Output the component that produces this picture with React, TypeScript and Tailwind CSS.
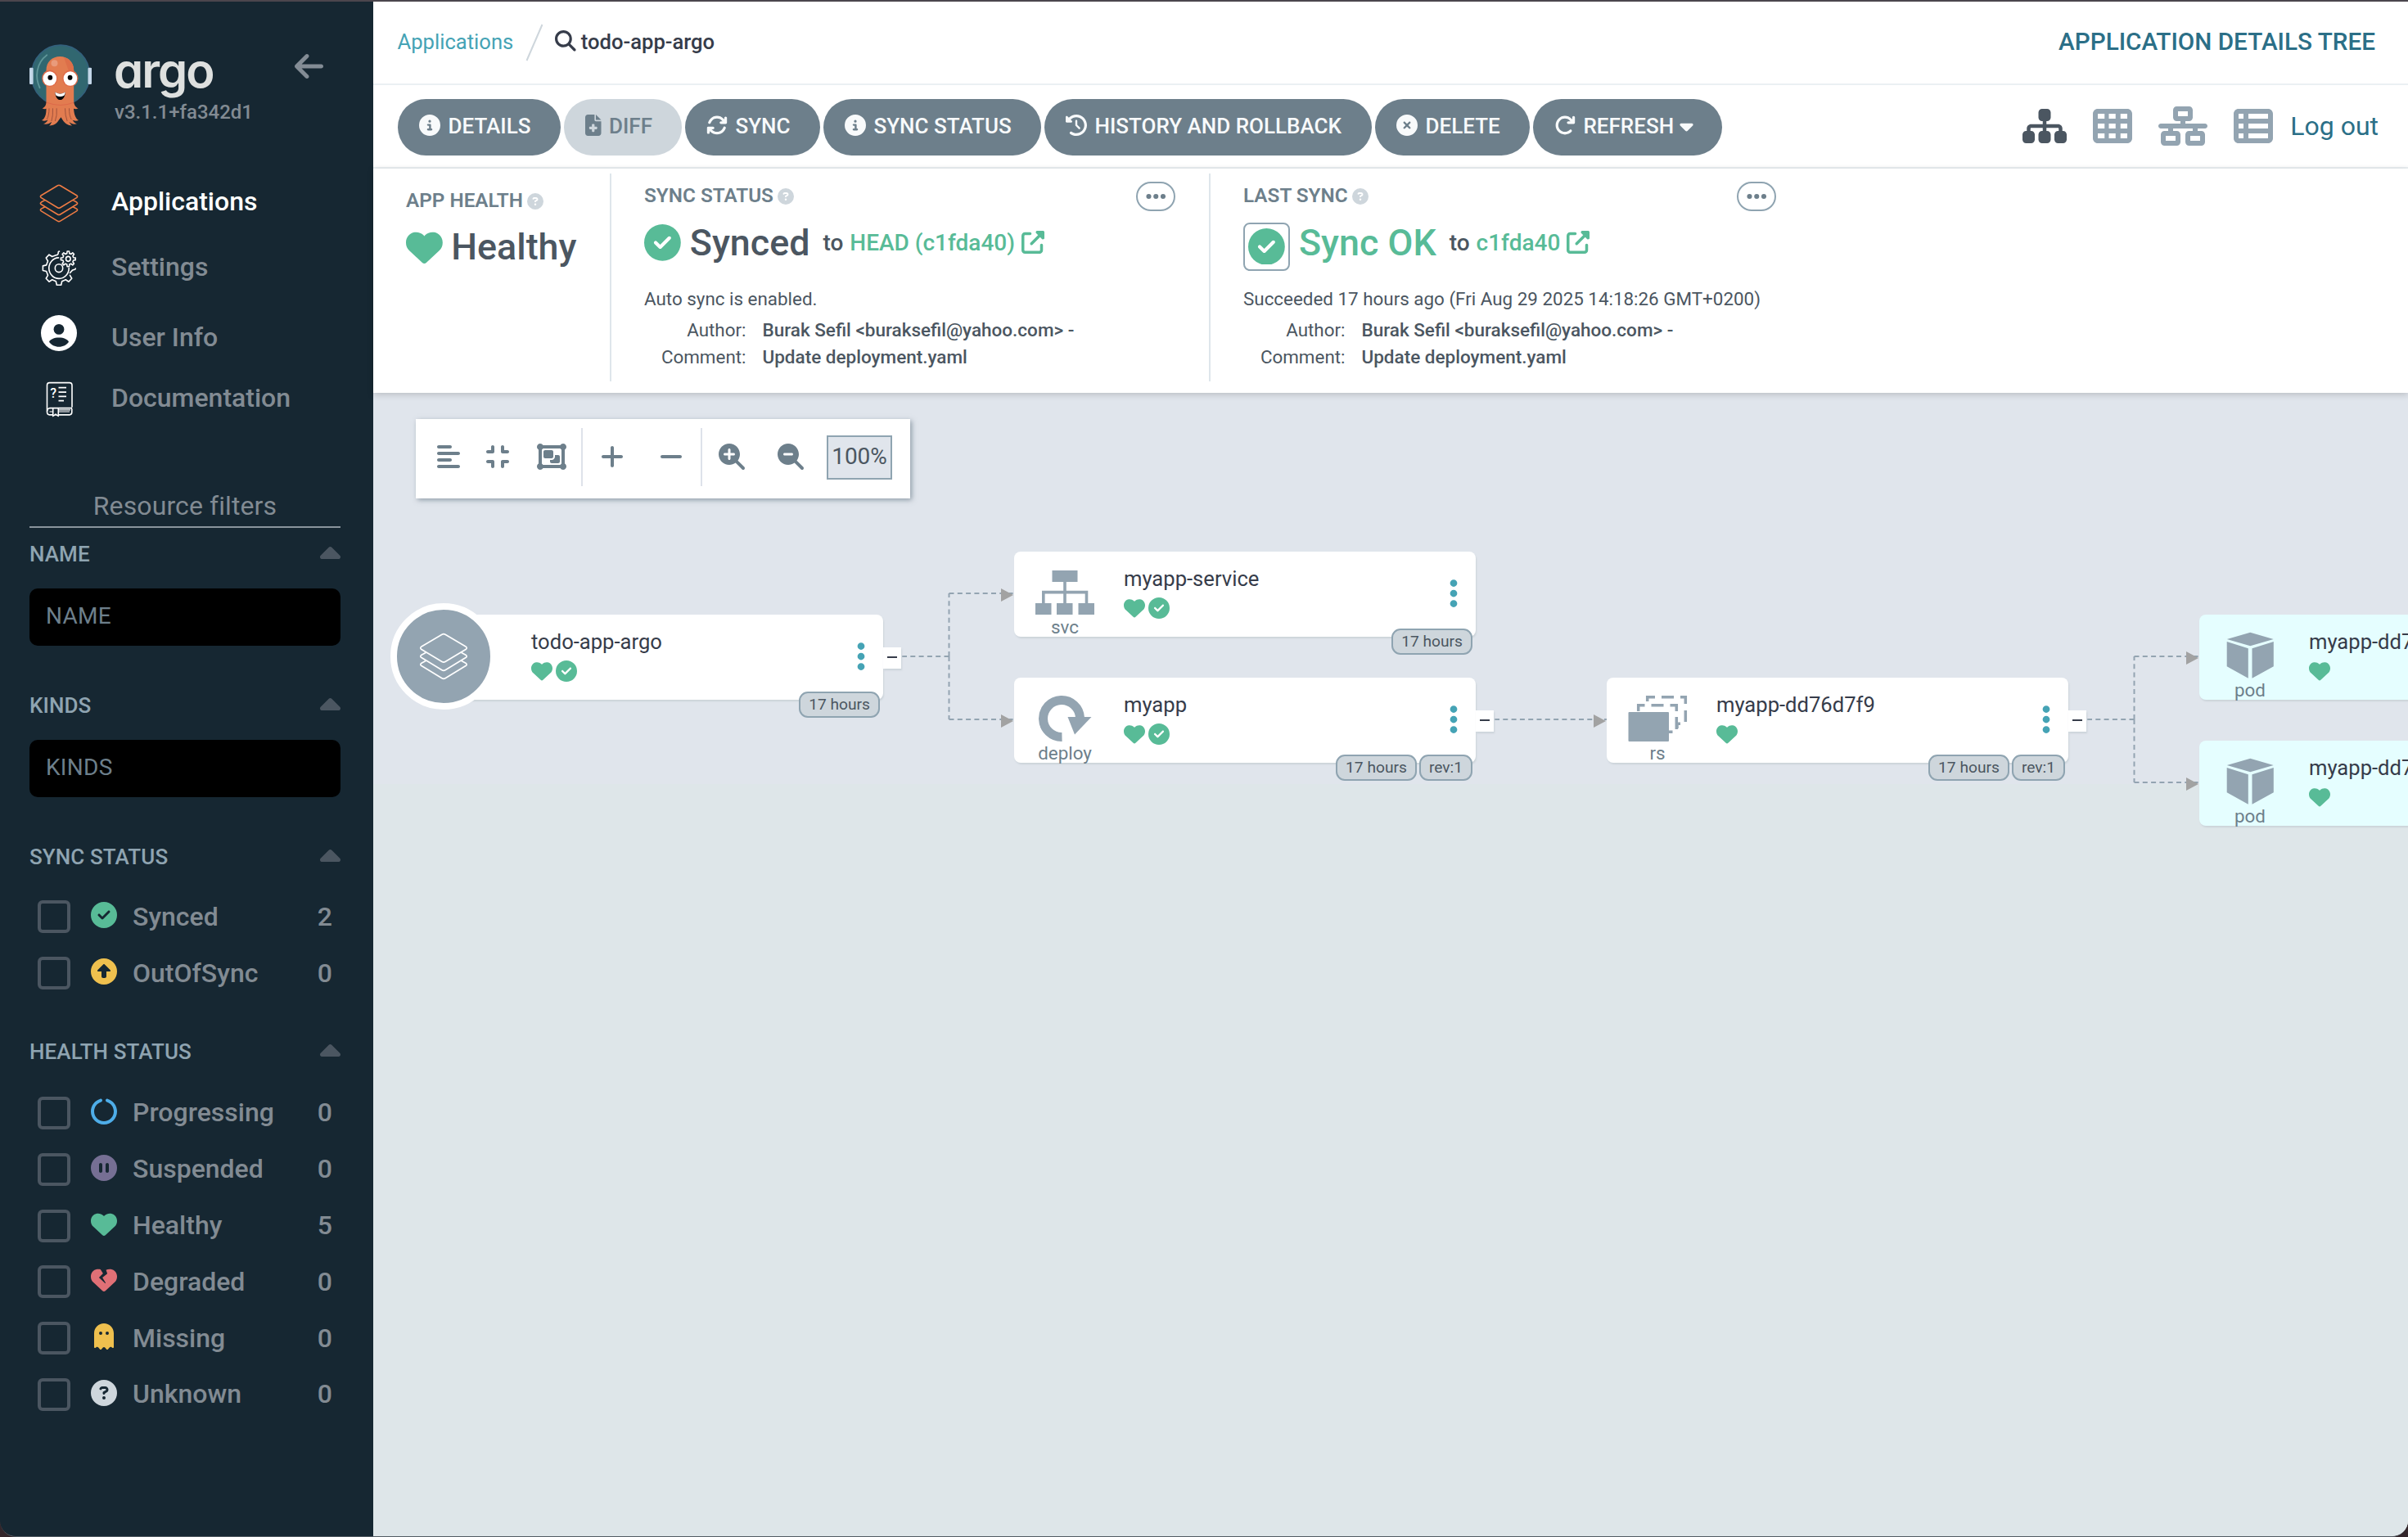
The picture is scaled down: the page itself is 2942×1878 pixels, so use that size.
import type { ReactNode } from "react";
import {
  FaAlignLeft, FaArrowLeft, FaArrowRotateRight, FaArrowsRotate, FaCaretDown, FaCaretUp, FaCircleCheck, FaCircleInfo,
  FaCircleNotch, FaCirclePause, FaCircleQuestion, FaCircleUp, FaCircleXmark, FaClockRotateLeft, FaCompress, FaEllipsis,
  FaEllipsisVertical, FaFileMedical, FaGhost, FaHeart, FaHeartCrack, FaMagnifyingGlass, FaMagnifyingGlassMinus,
  FaMagnifyingGlassPlus, FaMinus, FaNetworkWired, FaObjectGroup, FaPlus, FaSitemap, FaTableCells, FaTableList,
  FaUpRightFromSquare,
} from "react-icons/fa6";

/* ---------- drawings ---------- */

function Octopus() {
  return (
    <svg width="76" height="100" viewBox="0 0 76 94" preserveAspectRatio="none" className="shrink-0">
      <ellipse cx="38" cy="35.5" rx="35.5" ry="34.5" fill="#316770" stroke="#33607c" strokeWidth="1.6" />
      <rect x="0" y="27" width="4.6" height="19" rx="1.2" fill="#c3d6e8" />
      <rect x="71.5" y="27" width="4.6" height="19" rx="1.2" fill="#c3d6e8" />
      <path d="M21.3 12.5C8 22 6.500 38 12.600 50" fill="none" stroke="#5f9699" strokeWidth="1.8" strokeLinecap="round" />
      <path
        d="M20.500 30C20.500 20 28 14 37.300 14S54.200 20 54.200 30V66C54.500 70 57 73 59.500 73.500C57.500 75 56 74.500 54 74C54.500 80 56 85 60 87.500C57 88.500 54 88 52.500 87C54 89.500 56 91 58 91.500C54 92.500 50 91 48.500 89C49.500 91.500 51 92.500 52 93.500C47 93.500 43 91 40.500 87L38.500 84L36 87C33.500 91.500 28.500 93.800 24 93.500C25.500 92.500 26.500 91 27 89C24.500 91.500 20.500 92.500 17 91.500C20 90.500 21.500 89 22.500 87C20.500 88.200 17.500 88.500 15 87.500C19.500 85 20.500 80 20.500 74C19 74.800 17.500 74.500 15.500 73.500C18.500 73 20.500 70 20.500 66Z"
        fill="#e27c50"
      />
      <path d="M42 15C50 17 54.200 23 54.200 30V42L48 31Z" fill="#dd6f49" />
      <path d="M24 74Q24 82 21.500 86M28.500 74Q29 82 27 88M33.200 74Q34 82 31.500 88M43.500 74Q43.500 82 46 88M48.500 74Q48.500 82 51 86" stroke="#9c4f3a" strokeWidth="0.900" fill="none" strokeLinecap="round" />
      <path d="M21 67Q38 73 54 67" stroke="#dd6a4a" strokeWidth="1" fill="none" />
      <ellipse cx="30.500" cy="21.800" rx="4" ry="3.800" fill="#e99b7b" />
      <circle cx="24.800" cy="39.300" r="9.600" fill="#df6a48" />
      <circle cx="49.900" cy="39.300" r="9.600" fill="#df6a48" />
      <circle cx="24.800" cy="39.500" r="8.300" fill="#fff" />
      <circle cx="49.900" cy="39.500" r="8.300" fill="#fff" />
      <circle cx="25.300" cy="38.300" r="2.900" fill="#05070a" />
      <circle cx="49.600" cy="38.300" r="2.900" fill="#05070a" />
      <path d="M31.300 55Q37.500 59 43.800 55C43.600 60.500 41 64 37.500 64S31.600 60.500 31.300 55Z" fill="#05070a" />
      <path d="M31.300 55Q37.500 59 43.800 55Q43.500 57.500 42.300 59Q37.500 61.500 32.600 59Q31.500 57.500 31.300 55Z" fill="#fff" />
    </svg>
  );
}

function Layers({ width, height, stroke }: { width: number; height: number; stroke: number }) {
  return (
    <svg width={width} height={height} viewBox="-1 -1 60 58" preserveAspectRatio="none" fill="none" stroke="currentColor" strokeWidth={stroke} strokeLinejoin="round" strokeLinecap="round">
      <path d="M27 1.200Q29 0 31 1.200L56 15.900Q58.500 17.700 56 19.500L31 34.500Q29 35.700 27 34.500L2 19.500Q-.5 17.700 2 15.900Z" />
      <path d="M7.500 23.200L2 26.200Q-.5 28 2 29.600L27 44.700Q29 45.900 31 44.700L56 29.600Q58.500 28 56 26.200L50.500 23.200" />
      <path d="M7.500 33.200L2 36.200Q-.5 38 2 39.600L27 54.700Q29 55.900 31 54.700L56 39.600Q58.500 38 56 36.200L50.500 33.200" />
    </svg>
  );
}

/* Outline of a cog: a rounded tooth every 360/teeth degrees, drawn from tooth `from` up to tooth `to`. */
function cog(cx: number, cy: number, root: number, tip: number, teeth: number, from: number, to: number) {
  const step = (Math.PI * 2) / teeth;
  const pts: string[] = [];
  const at = (r: number, a: number) => `${(cx + r * Math.cos(a)).toFixed(2)} ${(cy + r * Math.sin(a)).toFixed(2)}`;
  for (let i = from; i < to; i++) {
    const a = i * step;
    pts.push(at(root, a - step * 0.3), at(tip, a - step * 0.17), at(tip, a + step * 0.17), at(root, a + step * 0.3));
  }
  return "M" + pts.join("L");
}

function Gears() {
  return (
    <svg width="44" height="44" viewBox="-1 -1 44 42" preserveAspectRatio="none" fill="none" stroke="#fff" strokeWidth="1.6" strokeLinejoin="round" strokeLinecap="round">
      <path d={cog(21, 19.7, 15.8, 19.8, 8, 1, 6) + "L17.500 4.500Q20.500 4.500 20.200 1Q20.300 0 21.500 0"} />
      <path d="M34.500 25.200L37 22.500Q38 21.300 40 21.300Q41.300 21.200 41.300 20" />
      <path d="M20.500 7.500A12.200 12.200 0 1 0 33.200 19.500" />
      <circle cx="21" cy="19.700" r="4.700" />
      <path d={cog(32.3, 8.9, 6.6, 9, 8, 0, 8) + "Z"} />
      <circle cx="32.300" cy="8.900" r="2.800" />
    </svg>
  );
}

function UserCircle() {
  return (
    <svg width="44" height="44" viewBox="0 0 44 44">
      <circle cx="22" cy="22" r="22" fill="#fff" />
      <circle cx="22" cy="17.400" r="6.400" fill="#162732" />
      <path d="M10 32.800C11.500 29.500 16 27.500 22 27.500S32.500 29.500 34 32.800C31.500 36.600 27 38.800 22 38.800S12.500 36.600 10 32.800Z" fill="#162732" />
    </svg>
  );
}

function Book() {
  return (
    <svg width="34" height="44" viewBox="-1 -1 34 41" preserveAspectRatio="none" fill="none" stroke="#fff" strokeWidth="1.600" strokeLinejoin="round">
      <path d="M7 37H3.500Q.5 37 .5 33.500V3.500Q.5 .5 3.500 .5H28Q31 .5 31 3.500V28.500" />
      <path d="M31 29.500H3.500Q.8 29.700 .6 33M14.500 37H28.500Q31 36.500 30.800 33.500V30" />
      <path d="M3.500 33.400H7.500M14.500 33.400H28M14.500 31.500H29" strokeWidth="1" />
      <path d="M7.700 29.800V38.500L11 36.500L14.300 38.500V29.800" />
      <path d="M14.500 6.200H24M14.500 11.200H24M14.500 16.200H24M14.500 21H21" />
      <text x="4.200" y="17.500" fill="#fff" stroke="none" fontFamily="Roboto, sans-serif" fontWeight="500" fontSize="16">?</text>
    </svg>
  );
}

const kindDrawings: Record<string, ReactNode> = {
  svc: (
    <g>
      <path d="M46.500 23h31v14h-31zM26 63h19.500v14h-19.500zM52 63h19.500v14h-19.500zM78.500 63h19.500v14h-19.500z" fill="#93a4b1" />
      <path d="M62 37V63M35.800 63V49.600H88.500V63" fill="none" stroke="#93a4b1" strokeWidth="3.600" />
    </g>
  ),
  deploy: (
    <g>
      <path d="M58.500 72.500A22.500 22.500 0 1 1 80.500 49" fill="none" stroke="#93a4b1" strokeWidth="11" />
      <path d="M65.500 48H94.500L74 69.500Z" fill="#93a4b1" />
    </g>
  ),
  rs: (
    <g>
      <rect x="26.500" y="42" width="49.500" height="36" rx="1" fill="#93a4b1" />
      <path d="M38.700 41V33.700H46.500M54.500 33.700H69.500M77.500 33.700H85.300V41M85.300 48V63M80.500 66.300H76M86 58v4" fill="none" stroke="#93a4b1" strokeWidth="3.500" />
      <path d="M49.700 29V23.700H59M67 23.700H82M90 23.700H96.300V32M96.300 40V54M90 56.300H85" fill="none" stroke="#93a4b1" strokeWidth="3.500" />
    </g>
  ),
  pod: (
    <path d="M62.300 21.700L90.700 30L62.300 38.300L33.800 30ZM33.700 33L59.800 41.300V77.700L33.700 63.300ZM64.500 41.300L90.800 33V63.300L64.500 77.700Z" fill="#93a4b1" />
  ),
};

/* ---------- sidebar ---------- */

function NavItem({ icon, label, active, className }: { icon: ReactNode; label: string; active?: boolean; className: string }) {
  return (
    <div className={`flex h-10 items-center ${className}`}>
      <span className="flex w-[72px] shrink-0 justify-center">{icon}</span>
      <span className={`ml-[28px] text-[32px] leading-10 font-medium whitespace-nowrap ${active ? "text-white" : "text-[#828b93]"}`}>{label}</span>
    </div>
  );
}

function FilterHeading({ label, className }: { label: string; className: string }) {
  return (
    <div className={`flex h-[30px] items-center justify-between text-[26px] leading-[30px] font-medium tracking-[0.1px] text-[#8fa4b1] ${className}`}>
      <span className="mb-px">{label}</span>
      <FaCaretUp className="mt-px h-10 w-[25px] text-[#4b5661]" />
    </div>
  );
}

function FilterInput({ label }: { label: string }) {
  return (
    <div className="mt-[26.5px] flex h-[70px] items-center rounded-[10px] bg-black pb-px pl-[20px] text-[28px] tracking-[0.3px] text-[#6d7f8b]">{label}</div>
  );
}

function FilterRow({ icon, label, count }: { icon: ReactNode; label: string; count: number }) {
  return (
    <div className="flex h-[68.8px] items-center pr-[10px] pl-[10px] text-[32px] leading-10 font-medium text-[#828b93]">
      <span className="size-10 shrink-0 rounded-md border-4 border-[#4b5661]" />
      <span className="mb-1 ml-[25px] flex w-8 justify-center text-[32px]">{icon}</span>
      <span className="mb-px ml-[19px] flex-1">{label}</span>
      <span className="mb-px">{count}</span>
    </div>
  );
}

function Sidebar() {
  return (
    <aside className="flex h-full w-[456px] shrink-0 flex-col bg-[#162732] pr-10 pl-9">
      <div className="mt-[51.5px] flex h-[100px] shrink-0">
        <Octopus />
        <div className="ml-7 flex flex-1 flex-col">
          <span className="mt-[2px] -ml-px font-[Inter] text-[58px] leading-[60px] font-semibold tracking-[-2px] text-[#dee0df] [font-feature-settings:'cv11']">argo</span>
          <span className="mt-[7px] text-[24px] leading-7 font-medium text-[#828b93]">v3.1.1+fa342d1</span>
        </div>
        <FaArrowLeft className="mt-[7.5px] mr-[21px] h-10 w-[35px] text-[#838c95]" />
      </div>
      <nav className="mt-[72.5px]">
        <NavItem className="" active label="Applications" icon={<span className="mt-1 text-[#ee7b44]"><Layers width={48} height={47} stroke={2} /></span>} />
        <NavItem className="mt-[40px]" label="Settings" icon={<span className="mt-1"><Gears /></span>} />
        <NavItem className="mt-[46px]" label="User Info" icon={<span className="-mt-[11px]"><UserCircle /></span>} />
        <NavItem className="mt-[33.5px]" label="Documentation" icon={<span className="mt-[5px] ml-px"><Book /></span>} />
      </nav>
      <div className="mt-[92px] border-b-2 border-[#8a949c] pb-[5px] text-center text-[32px] leading-10 tracking-[0.1px] text-[#828b93]">Resource filters</div>
      <FilterHeading className="mt-[17.5px]" label="NAME" />
      <FilterInput label="NAME" />
      <FilterHeading className="mt-[58.5px]" label="KINDS" />
      <FilterInput label="KINDS" />
      <FilterHeading className="mt-[58.5px]" label="SYNC STATUS" />
      <div className="mt-[24px]">
        <FilterRow label="Synced" count={2} icon={<FaCircleCheck className="text-[#58bb97]" />} />
        <FilterRow label="OutOfSync" count={0} icon={<FaCircleUp className="text-[#efc04e]" />} />
      </div>
      <FilterHeading className="mt-[47px]" label="HEALTH STATUS" />
      <div className="mt-[25px]">
        <FilterRow label="Progressing" count={0} icon={<FaCircleNotch className="text-[#4eade8]" />} />
        <FilterRow label="Suspended" count={0} icon={<FaCirclePause className="text-[#766f94]" />} />
        <FilterRow label="Healthy" count={5} icon={<FaHeart className="text-[#58bb97]" />} />
        <FilterRow label="Degraded" count={0} icon={<FaHeartCrack className="text-[#e07076]" />} />
        <FilterRow label="Missing" count={0} icon={<FaGhost className="text-[#efc04e]" />} />
        <FilterRow label="Unknown" count={0} icon={<FaCircleQuestion className="text-[#ced6dc]" />} />
      </div>
    </aside>
  );
}

/* ---------- top bars ---------- */

function Breadcrumbs() {
  return (
    <div className="flex h-[102px] items-center border-b-2 border-[#ebf0f3] pr-[40px] pb-px pl-[29.5px] text-[25.6px]">
      <span className="text-[#45a3b5]">Applications</span>
      <svg width="22" height="46" viewBox="0 0 22 46" className="mr-[14px] ml-[15px]"><path d="M1.500 45L20.500 1" stroke="#ced6dc" strokeWidth="2" /></svg>
      <FaMagnifyingGlass className="mb-[3px] text-[#363c4a]" />
      <span className="ml-[6px] flex-1 font-medium text-[#363c4a]">todo-app-argo</span>
      <span className="mb-px text-[29.7px] font-medium text-[#2b6f87]">APPLICATION DETAILS TREE</span>
    </div>
  );
}

function ActionButton({ icon, children, width, tone = "bg-[#6d7f8b] text-[#f8fafb]" }: { icon: ReactNode; children: ReactNode; width: string; tone?: string }) {
  return (
    <span className={`flex h-[69px] shrink-0 items-center gap-[9.5px] rounded-full pb-[3px] pl-[26px] text-[26px] font-medium whitespace-nowrap ${width} ${tone}`}>
      <span className="-mt-[2px]">{icon}</span>
      <span>{children}</span>
    </span>
  );
}

function Toolbar() {
  return (
    <div className="flex h-[102px] justify-between border-b-2 border-[#ebf0f3] pr-[36px] pl-[30px]">
      <div className="mt-[17px] flex gap-1">
        <ActionButton width="w-[199px]" icon={<FaCircleInfo />}>DETAILS</ActionButton>
        <ActionButton width="w-[144px]" tone="bg-[#ced6dc] text-[#6d7f8b]" icon={<FaFileMedical className="w-[19.5px]" />}>DIFF</ActionButton>
        <ActionButton width="w-[165px]" icon={<FaArrowsRotate />}>SYNC</ActionButton>
        <ActionButton width="w-[266px]" icon={<FaCircleInfo />}>SYNC STATUS</ActionButton>
        <ActionButton width="w-[400px]" icon={<FaClockRotateLeft />}>HISTORY AND ROLLBACK</ActionButton>
        <ActionButton width="w-[189px]" icon={<FaCircleXmark />}>DELETE</ActionButton>
        <ActionButton width="w-[231px]" icon={<FaArrowRotateRight />}><span className="flex items-center gap-[7px]">REFRESH <FaCaretDown className="w-[17px]" /></span></ActionButton>
      </div>
      <div className="flex h-[100px] items-center gap-8 text-[#93a4b1]">
        <FaSitemap className="h-12 w-[54px] text-[#4b5661]" />
        <FaTableCells className="size-12" />
        <FaNetworkWired className="h-12 w-[60px]" />
        <FaTableList className="size-12" />
        <span className="mb-px -ml-[10.5px] text-[32px] text-[#2b6f87]">Log out</span>
      </div>
    </div>
  );
}

/* ---------- status panel ---------- */

function PanelLabel({ children }: { children: ReactNode }) {
  return (
    <span className="flex items-center gap-[5px] text-[24.3px] leading-[30px] font-semibold text-[#6d7f8b]">
      {children}
      <FaCircleQuestion className="mt-[2px] size-5 text-[#ced6dc]" />
    </span>
  );
}

function SyncColumn({ label, status, target, note, bordered }: { label: string; status: ReactNode; target: string; note: string; bordered?: boolean }) {
  return (
    <section className={`h-[254px] w-[732px] pt-[10px] pr-[41px] pl-10 ${bordered ? "border-r-2 border-[#dee6eb]" : ""}`}>
      <div className="flex h-9 items-center justify-between">
        <div className="mb-[2px]"><PanelLabel>{label}</PanelLabel></div>
        <span className="flex h-9 w-12 items-center justify-center rounded-full border-2 border-[#8fa4b1]"><FaEllipsis className="h-7 w-[24.5px] text-[#6d7f8b]" /></span>
      </div>
      <div className="mt-[13.5px] flex h-[50px] items-center">
        {status}
        <span className="ml-4 text-[28px] font-medium text-[#4b5661]">to</span>
        <span className="ml-2 text-[28px] font-medium text-[#58bb97]">{target}</span>
        <FaUpRightFromSquare className="mb-px ml-2 size-7 text-[#58bb97]" />
      </div>
      <div className="mt-[28.5px] text-[22.4px] leading-[30px] text-[#4b5661]">{note}</div>
      <div className="mt-[7px] grid grid-cols-[124.5px_1fr] gap-x-[20px] text-[22.4px] leading-[33px] text-[#4b5661]">
        <span className="text-right">Author:</span>
        <span className="text-[22.5px] font-medium">Burak Sefil &lt;buraksefil@yahoo.com&gt; -</span>
        <span className="text-right">Comment:</span>
        <span className="text-[22.5px] font-medium">Update deployment.yaml</span>
      </div>
    </section>
  );
}

function StatusPanel() {
  return (
    <div className="relative z-10 flex h-[274px] bg-white pt-[6px] shadow-[0_2px_8px_rgba(0,0,0,0.18)]">
      <section className="h-[254px] w-[291px] border-r-2 border-[#dee6eb] pt-[18px] pl-10">
        <PanelLabel>APP HEALTH</PanelLabel>
        <div className="mt-[17px] flex h-[50px] items-center gap-[10.5px]">
          <FaHeart className="size-[44.8px] text-[#58bb97]" />
          <span className="text-[44.8px] font-medium text-[#4b5661]">Healthy</span>
        </div>
      </section>
      <SyncColumn
        bordered
        label="SYNC STATUS"
        target="HEAD (c1fda40)"
        note="Auto sync is enabled."
        status={
          <>
            <FaCircleCheck className="size-[44.8px] text-[#58bb97]" />
            <span className="mt-px ml-[11px] text-[44.8px] leading-[50px] font-medium text-[#4b5661]">Synced</span>
          </>
        }
      />
      <SyncColumn
        label="LAST SYNC"
        target="c1fda40"
        note="Succeeded 17 hours ago (Fri Aug 29 2025 14:18:26 GMT+0200)"
        status={
          <>
            <span className="flex h-[59px] w-[57px] shrink-0 items-center justify-center self-start rounded-lg border-2 border-[#8fa4b1]"><FaCircleCheck className="size-[44.8px] text-[#58bb97]" /></span>
            <span className="mt-px ml-[11px] text-[44.8px] leading-[50px] font-medium text-[#58bb97]">Sync OK</span>
          </>
        }
      />
    </div>
  );
}

/* ---------- resource tree ---------- */

function ZoomBar() {
  return (
    <div className="absolute top-8 left-[52px] flex h-[97px] w-[604px] items-center bg-white pb-[5px] pl-[26px] text-[32px] text-[#6d7f8b] shadow-[2px_2px_6px_rgba(109,127,139,0.7)]">
      <FaAlignLeft className="h-8 w-7" />
      <FaCompress className="ml-8 h-8 w-7" />
      <FaObjectGroup className="ml-[34px] h-8 w-9" />
      <span className="ml-[18px] h-[71px] w-[2px] bg-[#dee2ea]" />
      <FaPlus className="ml-[22px] h-8 w-7" />
      <FaMinus className="ml-11 h-8 w-7" />
      <span className="ml-[22px] h-[71px] w-[2px] bg-[#dee2ea]" />
      <FaMagnifyingGlassPlus className="ml-5 size-8" />
      <FaMagnifyingGlassMinus className="ml-10 size-8" />
      <span className="mt-px ml-7 flex h-[54px] w-20 items-center justify-center border-2 border-[#8fa4b1] bg-[#e0e5ec] pb-[2px] text-[28px] text-[#4b5661]">100%</span>
    </div>
  );
}

type TreeNode = { id: string; name: string; kind: string; x: number; y: number; synced?: boolean; tags: string[]; children?: boolean };

const nodes: TreeNode[] = [
  { id: "app", name: "todo-app-argo", kind: "app", x: 59, y: 271, synced: true, tags: ["17 hours"], children: true },
  { id: "svc", name: "myapp-service", kind: "svc", x: 783, y: 194, synced: true, tags: ["17 hours"] },
  { id: "deploy", name: "myapp", kind: "deploy", x: 783, y: 348, synced: true, tags: ["17 hours", "rev:1"], children: true },
  { id: "rs", name: "myapp-dd76d7f9", kind: "rs", x: 1507, y: 348, tags: ["17 hours", "rev:1"], children: true },
  { id: "pod-1", name: "myapp-dd76d7f9", kind: "pod", x: 2231, y: 271, tags: [] },
  { id: "pod-2", name: "myapp-dd76d7f9", kind: "pod", x: 2231, y: 425, tags: [] },
];

function ResourceCard({ node }: { node: TreeNode }) {
  return (
    <div
      className={`absolute h-[104px] w-[564px] rounded-lg shadow-[1px_2px_2px_#ccd4da] ${node.kind === "pod" ? "bg-[#e5feff]" : "bg-white"}`}
      style={{ left: node.x, top: node.y }}
    >
      {node.kind === "app" ? (
        <span className="absolute -top-[14px] -left-[38px] flex size-[130px] items-center justify-center rounded-full border-8 border-white bg-[#93a4b1] text-white">
          <Layers width={60} height={58} stroke={1.7} />
        </span>
      ) : (
        <>
          <svg width="124" height="104" viewBox="0 0 124 104" className="absolute top-0 left-0">{kindDrawings[node.kind]}</svg>
          <span className="absolute top-[77px] left-0 w-[124px] text-center text-[22.4px] leading-[30px] text-[#6d7f8b]">{node.kind}</span>
        </>
      )}
      <div className="ml-[134px] pt-[18px] text-[25.6px] leading-[30px] whitespace-nowrap text-[#363c4a]">
        <div>{node.name}</div>
        <div className="mt-2 flex gap-1 text-[26px] text-[#58bb97]">
          <FaHeart />
          {node.synced && <FaCircleCheck />}
        </div>
      </div>
      <FaEllipsisVertical className="absolute top-[31px] left-[532px] h-10 w-[10px] text-[#45a3b5]" />
      {node.children && (
        <span className="absolute top-10 left-[564px] flex h-[26px] w-[22px] items-center justify-center bg-white pb-[2px] shadow-[1px_2px_2px_#ccd4da]">
          <span className="h-[2px] w-3 bg-[#363c4a]" />
        </span>
      )}
      {node.tags.length > 0 && (
        <div className="absolute top-[94px] right-1 flex gap-[3px] text-[19.2px] leading-[27px] whitespace-nowrap text-[#4b5661]">
          {node.tags.map((tag) => (
            <span key={tag} className="h-8 rounded-[11px] border-2 border-[#8fa4b1] bg-[#ced6dc] px-[10px]">{tag}</span>
          ))}
        </div>
      )}
    </div>
  );
}

function Edges() {
  return (
    <svg width="2486" height="560" viewBox="0 0 2486 560" className="absolute top-0 left-0">
      <g fill="none" stroke="#93a4b1" strokeWidth="2" strokeDasharray="6 4.3">
        <path d="M646 322H703.500" />
        <path d="M703.500 322V245" />
        <path d="M703.500 322V399" />
        <path d="M703.500 245H783" />
        <path d="M703.500 399H783" />
        <path d="M1370 399H1507" />
        <path d="M2094 399H2151.500" />
        <path d="M2151.500 399V322" />
        <path d="M2151.500 399V476" />
        <path d="M2151.500 322H2231" />
        <path d="M2151.500 476H2231" />
      </g>
      <path d="M767 239V255L782 247ZM767 393V409L782 401ZM1491 393V409L1506 401ZM2215 316V332L2230 324ZM2215 470V486L2230 478Z" fill="#a2a2a2" />
    </svg>
  );
}

function ResourceTree() {
  return (
    <div className="relative flex-1 overflow-hidden bg-[#dee6e9]">
      <div className="h-[478px] bg-[#e0e5ec]" />
      <ZoomBar />
      <Edges />
      {nodes.map((node) => (
        <ResourceCard key={node.id} node={node} />
      ))}
    </div>
  );
}

export default function App() {
  return (
    <div className="h-[1878px] w-[2942px] overflow-hidden bg-[#33262b] font-[Roboto,sans-serif]">
      <div className="flex h-full overflow-hidden rounded-b-[20px] border-t-2 border-b border-t-[#4b464d] border-b-[#525c63]">
        <Sidebar />
        <main className="flex min-w-0 flex-1 flex-col bg-white">
          <Breadcrumbs />
          <Toolbar />
          <StatusPanel />
          <ResourceTree />
        </main>
      </div>
    </div>
  );
}
